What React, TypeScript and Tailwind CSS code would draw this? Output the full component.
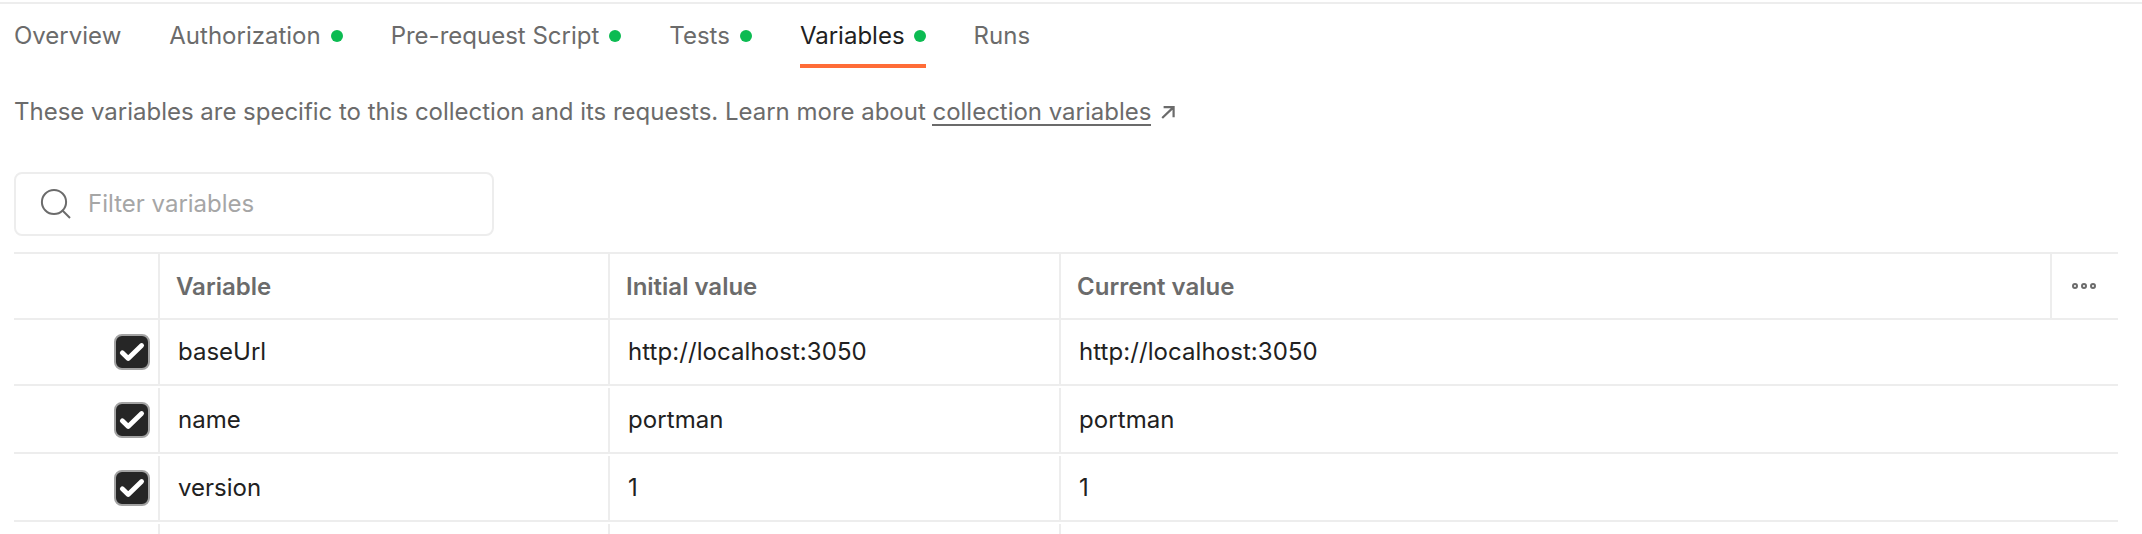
const tabs = [
  { label: "Overview", dot: false, active: false },
  { label: "Authorization", dot: true, active: false },
  { label: "Pre-request Script", dot: true, active: false },
  { label: "Tests", dot: true, active: false },
  { label: "Variables", dot: true, active: true },
  { label: "Runs", dot: false, active: false },
];

const rows = [
  { name: "baseUrl", initial: "http://localhost:3050", current: "http://localhost:3050" },
  { name: "name", initial: "portman", current: "portman" },
  { name: "version", initial: "1", current: "1" },
];

function SearchIcon() {
  return (
    <svg width="32" height="32" viewBox="0 0 32 32" fill="none" stroke="#6b6b6b" strokeWidth="2" className="shrink-0">
      <circle cx="14" cy="14" r="12.1" />
      <path d="M22.5 22.5L30 30" />
    </svg>
  );
}

function ArrowIcon() {
  return (
    <svg width="14" height="14" viewBox="0 0 14 14" fill="none" stroke="#6b6b6b" strokeWidth="2.2">
      <path d="M2.6 1.1H12.6V11.2M12.6 1.1L1.2 12" />
    </svg>
  );
}

function MoreIcon() {
  return (
    <svg width="24" height="6" viewBox="0 0 24 6" fill="none" stroke="#6b6b6b" strokeWidth="2">
      <circle cx="3" cy="3" r="2" />
      <circle cx="12" cy="3" r="2" />
      <circle cx="21" cy="3" r="2" />
    </svg>
  );
}

function Checkbox() {
  return (
    <span className="flex size-9 items-center justify-center rounded-lg border-2 border-[#a3a3a3] bg-[#262626]">
      <svg width="32" height="32" viewBox="0 0 32 32" fill="none" stroke="#fff" strokeWidth="4.8" strokeLinecap="round" strokeLinejoin="round">
        <path d="M6.3 16.8L12.2 22.5L25.6 9.5" />
      </svg>
    </span>
  );
}

export default function App() {
  return (
    <div className="h-[534px] w-[2142px] overflow-hidden bg-white pt-0.5 font-['Inter',sans-serif] text-[24px] leading-8 text-[#6b6b6b]">
      <div className="border-t-2 border-[#ededed] pr-6 pl-3.5">
        <nav className="flex h-16 gap-12">
          {tabs.map((tab) => (
            <div
              key={tab.label}
              className={
                tab.active
                  ? "flex items-start gap-[9px] border-b-4 border-[#ff6c37] pt-4 text-[#212121]"
                  : "flex items-start gap-[10px] pt-4"
              }
            >
              <span>{tab.label}</span>
              {tab.dot && <span className="mt-[10px] size-3 rounded-full bg-[#0cbb52]" />}
            </div>
          ))}
        </nav>

        <div className="mt-7 flex h-8 tracking-[-0.015px] whitespace-pre">
          <span>These variables are specific to this collection and its requests. Learn more about </span>
          <a className="h-[30px] border-b-2 border-[#6b6b6b]">collection variables</a>
          <span className="mt-[10px] ml-[10px]">
            <ArrowIcon />
          </span>
        </div>

        <div className="mt-11 flex h-16 w-[480px] items-center rounded-lg border-2 border-[#ededed] pl-6">
          <SearchIcon />
          <span className="ml-4 text-[#a6a6a6]">Filter variables</span>
        </div>

        <div className="mt-4 border-t-2 border-[#ededed]">
          <div className="flex h-[66px] border-b-2 border-[#ededed] font-semibold">
            <div className="w-[146px] border-r-2 border-[#ededed]" />
            <div className="w-[450px] border-r-2 border-[#ededed] pt-[17px] pl-4">Variable</div>
            <div className="w-[451px] border-r-2 border-[#ededed] pt-[17px] pl-4">Initial value</div>
            <div className="w-[991px] border-r-2 border-[#ededed] pt-[17px] pl-4">Current value</div>
            <div className="flex flex-1 items-center justify-center pr-0.5">
              <MoreIcon />
            </div>
          </div>
          {rows.map((row) => (
            <div key={row.name} className="flex h-[68px] items-end border-b-2 border-[#ededed] text-[#212121] nth-[2]:h-[66px]">
              <div className="flex h-16 w-[146px] items-start justify-end border-r-2 border-[#ededed] pt-[14px] pr-2">
                <Checkbox />
              </div>
              <div className="h-16 w-[450px] border-r-2 border-[#ededed] pt-4 pl-[18px]">{row.name}</div>
              <div className="h-16 w-[451px] border-r-2 border-[#ededed] pt-4 pl-[18px] tracking-[0.07px]">{row.initial}</div>
              <div className="h-16 flex-1 pt-4 pl-[18px] tracking-[0.07px]">{row.current}</div>
            </div>
          ))}
          <div className="flex h-3 items-end">
            <div className="h-[10px] w-[146px] border-r-2 border-[#ededed]" />
            <div className="h-[10px] w-[450px] border-r-2 border-[#ededed]" />
            <div className="h-[10px] w-[451px] border-r-2 border-[#ededed]" />
          </div>
        </div>
      </div>
    </div>
  );
}
